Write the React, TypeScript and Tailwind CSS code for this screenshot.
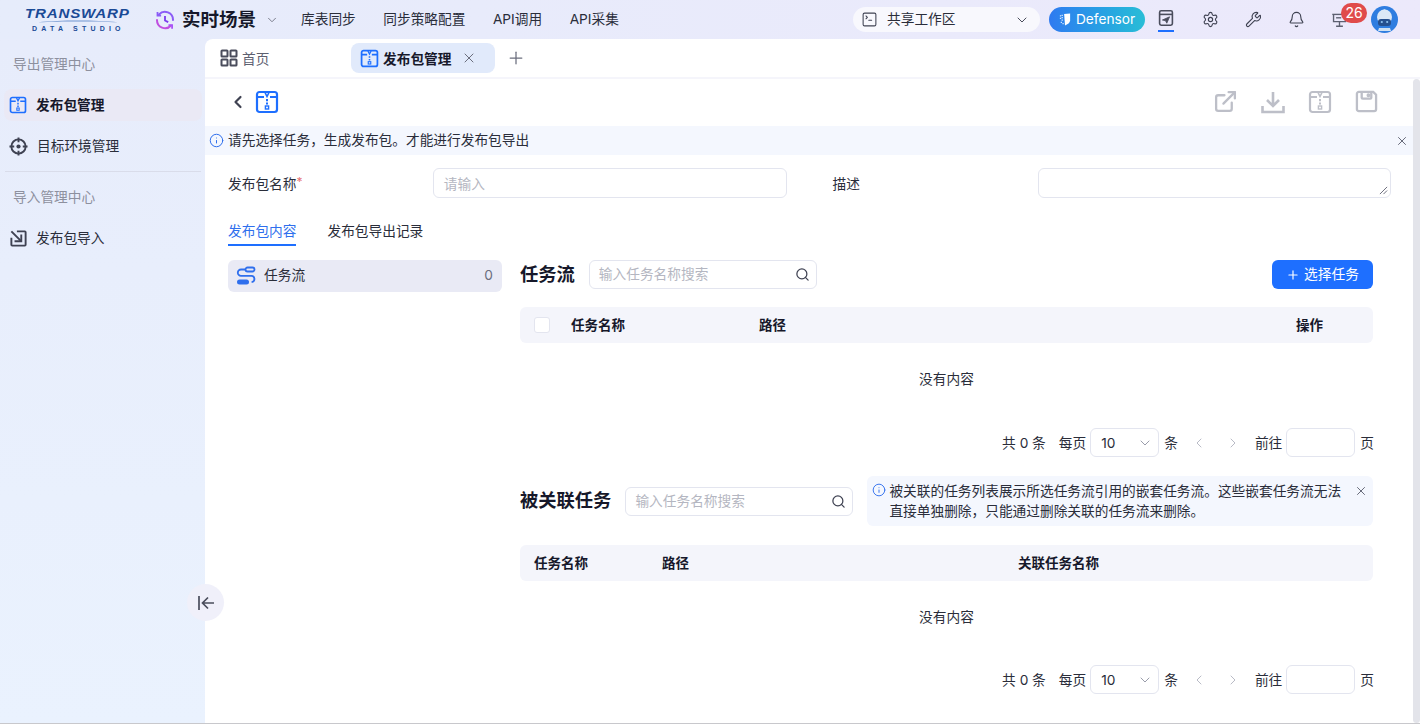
import { ChevronDown, ChevronLeft, ChevronRight, Search, Plus, X, Info, Settings, Wrench, Bell, ExternalLink, SquareTerminal } from 'lucide-react';

function ZipIcon({ className }: { className?: string }) {
  return (
    <svg viewBox="0 0 24 24" fill="none" stroke="currentColor" strokeWidth="2.2" className={className}>
      <rect x="2" y="2" width="20" height="20" rx="2.5" />
      <path d="M2 7h7M15 7h7" />
      <path d="M10 2.5l2 4 2-4" strokeWidth="1.6" />
      <path d="M12 9v2.2M12 12.6v2" strokeWidth="2" />
      <rect x="10.4" y="16" width="3.2" height="3" strokeWidth="1.4" />
    </svg>
  );
}

function SendBoxIcon({ className }: { className?: string }) {
  return (
    <svg viewBox="0 0 20 22" fill="none" stroke="currentColor" strokeWidth="2" className={className}>
      <rect x="2" y="2" width="16" height="18" rx="2" />
      <path d="M2 6.5h16" />
      <path d="M5.5 13.5l9-4-3.5 8-1.5-3z" fill="currentColor" strokeWidth="1" />
    </svg>
  );
}

function DisplayIcon({ className }: { className?: string }) {
  return (
    <svg viewBox="0 0 20 20" fill="none" stroke="currentColor" strokeWidth="1.6" className={className}>
      <path d="M1.5 4h17" />
      <path d="M3 4v8.5h14V4" />
      <path d="M10 12.5V18M6 18h8" />
      <path d="M6 8h6" />
    </svg>
  );
}

function FlowIcon({ className }: { className?: string }) {
  return (
    <svg viewBox="0 0 20 20" fill="none" className={className}>
      <rect x="9.5" y="1.5" width="9" height="4" rx="2" stroke="#2f6fed" strokeWidth="1.8" />
      <path d="M9.5 3.5H5a3.2 3.2 0 0 0 0 6.4h10a3.1 3.1 0 0 1 .6 6.2" stroke="#2f6fed" strokeWidth="1.8" />
      <rect x="1" y="13.5" width="12" height="5" rx="2.5" fill="#2f6fed" />
    </svg>
  );
}

function ScenarioIcon() {
  return (
    <svg viewBox="0 0 20 20" fill="none" className="w-[20px] h-[20px]">
      <path d="M4 4.5A8 8 0 0 1 18 10" stroke="#8b5cf6" strokeWidth="2" strokeLinecap="round" />
      <path d="M16 15.5A8 8 0 0 1 2 10" stroke="#c04fe0" strokeWidth="2" strokeLinecap="round" />
      <path d="M2.5 2v3.6h3.6" stroke="#8b5cf6" strokeWidth="1.8" />
      <path d="M13.5 15.2h3.6v3.6" stroke="#a855f7" strokeWidth="1.8" />
      <path d="M10 6v4.5l3.2 1.6" stroke="#7c3aed" strokeWidth="1.8" />
    </svg>
  );
}

function TargetIcon() {
  return (
    <svg viewBox="0 0 20 20" fill="none" stroke="#3f4252" strokeWidth="2" className="w-[19px] h-[19px]">
      <circle cx="10" cy="10" r="7.5" />
      <path d="M10 0.500v5M10 14.500v5M0.500 10h5M14.500 10h5" />
      <circle cx="10" cy="10" r="2.200" fill="#3f4252" stroke="none" />
    </svg>
  );
}

function ImportIcon() {
  return (
    <svg viewBox="0 0 24 24" fill="none" stroke="#3f4252" strokeWidth="2.4" className="w-[19px] h-[19px]">
      <path d="M10 3h10a1 1 0 0 1 1 1v16a1 1 0 0 1-1 1H4a1 1 0 0 1-1-1V11" />
      <path d="M3 3l12 12" />
      <path d="M15.5 7v8.500H7" />
    </svg>
  );
}

function GridIcon() {
  return (
    <svg viewBox="0 0 18 18" fill="none" stroke="#4a4d5c" strokeWidth="2" className="w-[18px] h-[18px]">
      <rect x="1.5" y="1.5" width="6" height="6" rx="0.6" />
      <rect x="10.5" y="1.5" width="6" height="6" rx="0.6" />
      <rect x="1.5" y="10.5" width="6" height="6" rx="0.6" />
      <rect x="10.5" y="10.5" width="6" height="6" rx="0.6" />
    </svg>
  );
}

function TrayDownloadIcon() {
  return (
    <svg viewBox="0 0 24 24" fill="none" stroke="currentColor" strokeWidth="2.6" className="w-[24px] h-[24px]">
      <path d="M12 2v13M6 10l6 6 6-6" />
      <path d="M1.5 16v6h21v-6" />
    </svg>
  );
}

function FloppyIcon() {
  return (
    <svg viewBox="0 0 24 24" fill="none" stroke="currentColor" strokeWidth="2.4" className="w-[23px] h-[23px]">
      <path d="M4 2h15l3 3v15a2 2 0 0 1-2 2H4a2 2 0 0 1-2-2V4a2 2 0 0 1 2-2z" />
      <path d="M7 2v6a1 1 0 0 0 1 1h8a1 1 0 0 0 1-1V2" />
      <circle cx="14" cy="5.5" r="0.8" fill="currentColor" />
    </svg>
  );
}

function Avatar() {
  return (
    <svg viewBox="0 0 27 27" className="w-[27px] h-[27px]">
      <circle cx="13.5" cy="13.5" r="13.5" fill="#2f7de0" />
      <circle cx="13.5" cy="11" r="7.5" fill="#dbe8f6" />
      <circle cx="13.5" cy="4.5" r="1.2" fill="#dbe8f6" />
      <rect x="7" y="13" width="13" height="7" rx="3" fill="#25508f" />
      <circle cx="10.8" cy="16" r="1.1" fill="#8fc4f2" />
      <circle cx="16.2" cy="16" r="1.1" fill="#8fc4f2" />
      <path d="M8 22h11l1 3H7z" fill="#cfe0f2" />
    </svg>
  );
}

function Pagination() {
  return (
    <div className="-mr-[1px] flex items-center justify-end h-[29px] text-[#2a2d3a] [&>span]:mt-[2px]">
      <span>共 0 条</span>
      <span className="ml-[13px]">每页</span>
      <div className="ml-[4px] w-[69px] h-[29px] border border-[#e3e5ef] rounded-[6px] flex items-center justify-between pl-[10px] pr-[5px]">
        <span className="mt-[2px]">10</span>
        <ChevronDown className="w-4 h-4 text-[#9a9dab]" strokeWidth={1.5} />
      </div>
      <span className="ml-[5px]">条</span>
      <ChevronLeft className="ml-[13px] w-4 h-4 text-[#b9bbc6]" strokeWidth={1.5} />
      <ChevronRight className="ml-[18px] w-4 h-4 text-[#b9bbc6]" strokeWidth={1.5} />
      <span className="ml-[14px]">前往</span>
      <div className="ml-[4px] w-[69px] h-[29px] border border-[#e3e5ef] rounded-[6px]" />
      <span className="ml-[5px]">页</span>
    </div>
  );
}

function SearchBox() {
  return (
    <div className="w-[228px] h-[29px] border border-[#e3e5ef] rounded-[6px] flex items-center justify-between pl-[9px] pr-[6px] bg-white">
      <span className="text-[#b4b6c1]">输入任务名称搜索</span>
      <Search className="w-[15px] h-[15px] text-[#3f4252]" strokeWidth={2} />
    </div>
  );
}

export default function App() {
  return (
    <div className="w-[1420px] h-[724px] overflow-hidden flex flex-col border-b border-[#c8c8cc] bg-gradient-to-r from-[#e6ecfb] to-[#ece9fb] text-[13.7px] text-[#2a2d3a] font-['Inter','Noto_Sans_CJK_SC',sans-serif]">
      {/* top bar */}
      <header className="h-[39px] shrink-0 flex items-center">
        <div className="w-[155px] pl-[25px] flex flex-col items-start leading-none relative">
          <span className="font-['Liberation_Sans',sans-serif] italic font-bold text-[13.5px] tracking-[0.7px] scale-x-[1.12] origin-left text-[#1a4a96]">TRANSWARP</span>
          <svg viewBox="0 0 106 4" className="w-[106px] h-[3px]"><path d="M0 3C30 0 76 0 106 3 76 1.5 30 1.5 0 3z" fill="#6f94cf" /></svg>
          <span className="mt-[2px] ml-[7px] font-['Liberation_Sans',sans-serif] font-bold text-[7px] tracking-[4.2px] text-[#1a4a96]">DATA STUDIO</span>
        </div>
        <ScenarioIcon />
        <span className="ml-[7px] text-[18.5px] font-bold text-[#16182a]">实时场景</span>
        <ChevronDown className="ml-[9px] w-[14px] h-[14px] text-[#6b6e7d]" strokeWidth={1.5} />
        <nav className="ml-[22px] flex gap-[27.5px]">
          <span>库表同步</span>
          <span>同步策略配置</span>
          <span>API调用</span>
          <span>API采集</span>
        </nav>
        <div className="ml-auto flex items-center">
          <div className="w-[187px] h-[25px] rounded-full bg-[#f8f8fd] flex items-center pl-[8px] pr-[10px]">
            <SquareTerminal className="w-[17px] h-[17px] text-[#3f4252]" strokeWidth={1.5} />
            <span className="ml-[9px]">共享工作区</span>
            <ChevronDown className="ml-auto w-[16px] h-[16px] text-[#4a4d5c]" strokeWidth={1.5} />
          </div>
          <div className="ml-[9px] w-[96px] h-[25px] rounded-full bg-gradient-to-r from-[#2f7af0] to-[#29bdd6] flex items-center justify-center text-white gap-[5px]">
            <svg viewBox="0 0 14 16" className="w-[12px] h-[15px]" fill="white">
              <path d="M6 1.6 13 1v8c0 3-3 5-6 6z" />
              <path d="M1 3h1.5v1.5H1zM3 2.500h1.500V4H3zM1 6h1.500v1.500H1zM3 5h1.500v1.500H3zM3 8h1.500v1.500H3zM2 10.500h1.500V12H2zM4 12h1.500v1.500H4z" opacity="0.8" />
            </svg>
            <span>Defensor</span>
          </div>
          <div className="ml-[13px] w-[16px] h-[25px] flex flex-col items-center justify-end">
            <SendBoxIcon className="w-[16px] h-[18px] text-[#4a4d5c]" />
            <div className="w-[16px] h-[2px] mt-[3px] bg-[#1e6fff]" />
          </div>
          <Settings className="ml-[28px] w-[17px] h-[17px] text-[#3f4252]" strokeWidth={1.6} />
          <Wrench className="ml-[26px] w-[17px] h-[17px] text-[#3f4252]" strokeWidth={1.6} />
          <Bell className="ml-[26px] w-[17px] h-[17px] text-[#3f4252]" strokeWidth={1.6} />
          <div className="ml-[26px] relative w-[17px] h-[17px]">
            <DisplayIcon className="w-[17px] h-[17px] text-[#5d6070]" />
            <span className="absolute -top-[8px] left-[10px] w-[26px] h-[20px] rounded-full bg-[#e04b4b] text-white text-[14px] leading-[20px] text-center">26</span>
          </div>
          <div className="ml-[23px] mr-[22px]">
            <Avatar />
          </div>
        </div>
      </header>

      <div className="flex-1 flex min-h-0">
        {/* left menu */}
        <aside className="w-[205px] shrink-0 relative bg-gradient-to-b from-[#e7ecfb] to-[#eaf2fe]">
          <div className="pl-[13px] h-[50px] flex items-center text-[#8d909e]">导出管理中心</div>
          <div className="ml-[4px] mr-[3px] h-[32px] rounded-[8px] bg-[#eae9f5] flex items-center pl-[5px] font-bold text-[#16182a]">
            <ZipIcon className="w-[18px] h-[18px] text-[#1e6fff]" />
            <span className="ml-[9px]">发布包管理</span>
          </div>
          <div className="mt-[9px] h-[32px] flex items-center pl-[9px]">
            <TargetIcon />
            <span className="ml-[9px]">目标环境管理</span>
          </div>
          <div className="mt-[9px] ml-[5px] mr-[4px] border-t border-[#d9dcea]" />
          <div className="pl-[13px] h-[50px] flex items-center text-[#8d909e]">导入管理中心</div>
          <div className="h-[32px] flex items-center pl-[9px]">
            <ImportIcon />
            <span className="ml-[8px]">发布包导入</span>
          </div>
          <div className="absolute left-[187px] top-[545px] w-[37px] h-[37px] rounded-full bg-[#f0f0fa] flex items-center justify-center z-10">
            <svg viewBox="0 0 20 20" fill="none" stroke="#4a4d5c" strokeWidth="1.7" className="w-[20px] h-[20px]">
              <path d="M3 3v14M18 10H6.500M12 4.500 6.500 10l5.500 5.500" />
            </svg>
          </div>
        </aside>

        {/* page */}
        <main className="flex-1 min-w-0 bg-white rounded-tl-[8px] flex flex-col">
          <div className="h-[38px] shrink-0 border-b-2 border-[#f5f5fb] flex items-center box-content">
            <div className="w-[146px] h-[30px] flex items-center pl-[15px] text-[#5d6070]">
              <GridIcon />
              <span className="ml-[4px] mt-[2px]">首页</span>
            </div>
            <div className="w-[144px] h-[30px] rounded-[8px] bg-[#e1eafb] flex items-center pl-[9px] font-bold text-[#16182a]">
              <ZipIcon className="w-[19px] h-[19px] text-[#1e6fff]" />
              <span className="ml-[4px] mt-[2px]">发布包管理</span>
              <X className="ml-[10px] w-[16px] h-[16px] text-[#6b6e7d]" strokeWidth={1.5} />
            </div>
            <Plus className="ml-[11px] w-[20px] h-[20px] text-[#6b6e7d]" strokeWidth={1.5} />
          </div>

          <div className="flex-1 flex min-h-0">
            <div className="flex-1 min-w-0">
              <div className="h-[47px] flex items-center pl-[23px] pr-[35px] pb-[2px]">
                <ChevronLeft className="w-[20px] h-[20px] text-[#3f4252]" strokeWidth={2.6} />
                <ZipIcon className="ml-[7px] w-[24px] h-[24px] text-[#1e6fff]" />
                <div className="ml-auto flex items-center gap-[23px] text-[#bdbfc8]">
                  <ExternalLink className="w-[25px] h-[25px]" strokeWidth={2.2} />
                  <TrayDownloadIcon />
                  <ZipIcon className="w-[24px] h-[24px]" />
                  <FloppyIcon />
                </div>
              </div>

              <div className="h-[29px] bg-[#f4f7fe] flex items-center pl-[4px] pr-[4px]">
                <Info className="w-[15px] h-[15px] text-[#2f6fed]" strokeWidth={1.6} />
                <span className="ml-[4px]">请先选择任务，生成发布包。才能进行发布包导出</span>
                <X className="ml-auto w-[14px] h-[14px] text-[#5d6070]" strokeWidth={1.6} />
              </div>

              <div className="mt-[13px] flex items-start pl-[23px] pr-[22px] h-[30px]">
                <div className="w-[205px] h-[30px] pt-[2px] flex items-center">发布包名称<span className="text-[#e57373] self-start mt-[3px] text-[12px]">*</span></div>
                <div className="w-[354px] h-[30px] pt-[2px] border border-[#e3e5ef] rounded-[6px] flex items-center pl-[10px] text-[#b4b6c1]">请输入</div>
                <div className="ml-[46px] w-[206px] h-[30px] pt-[2px] flex items-center">描述</div>
                <div className="w-[353px] h-[30px] border border-[#e3e5ef] rounded-[6px] relative">
                  <svg viewBox="0 0 10 10" className="absolute right-[2px] bottom-[2px] w-[9px] h-[9px]" stroke="#5d6070" strokeWidth="1"><path d="M9 1 1 9M9 5 5 9" /></svg>
                </div>
              </div>

              <div className="mt-[21px] pl-[23px] flex gap-[31px] h-[27px]">
                <div className="h-[27px] border-b-2 border-[#1e6fff] text-[#2f6fed] leading-[24px]">发布包内容</div>
                <div className="leading-[24px]">发布包导出记录</div>
              </div>

              <div className="mt-[14px] pl-[23px] pr-[40px] flex items-start">
                <div className="w-[274px] h-[32px] rounded-[6px] bg-[#e9eaf5] flex items-center pl-[8px] pr-[9px]">
                  <FlowIcon className="w-[20px] h-[20px]" />
                  <span className="ml-[8px] mb-[1px]">任务流</span>
                  <span className="ml-auto mb-[1px] text-[#6b6e7d]">0</span>
                </div>

                <div className="ml-[18px] flex-1 min-w-0">
                  <div className="flex items-center h-[29px]">
                    <span className="text-[18.3px] font-bold text-[#16182a]">任务流</span>
                    <div className="ml-[14px]"><SearchBox /></div>
                    <div className="ml-auto w-[101px] h-[29px] rounded-[6px] bg-[#1e6fff] text-white flex items-center justify-center gap-[4px]">
                      <Plus className="w-[14px] h-[14px]" strokeWidth={2} />
                      <span>选择任务</span>
                    </div>
                  </div>

                  <div className="mt-[18px] h-[36px] rounded-[6px] bg-[#f4f5fb] flex items-center font-bold text-[13.5px] text-[#16182a]">
                    <div className="ml-[14px] w-[16px] h-[16px] rounded-[3px] border border-[#e3e5ef] bg-white" />
                    <span className="ml-[21px] w-[188px]">任务名称</span>
                    <span>路径</span>
                    <span className="ml-auto mr-[50px]">操作</span>
                  </div>
                  <div className="h-[71px] pt-[2px] flex items-center justify-center">没有内容</div>
                  <div className="mt-[14px]"><Pagination /></div>

                  <div className="mt-[19px] flex items-center h-[50px]">
                    <span className="text-[18.3px] font-bold text-[#16182a]">被关联任务</span>
                    <div className="ml-[14px]"><SearchBox /></div>
                    <div className="ml-[14px] flex-1 h-[50px] rounded-[6px] bg-[#f4f7fe] flex items-start pl-[5px] pr-[5px] pt-[6px] leading-[19.5px]">
                      <Info className="mt-[1px] w-[14px] h-[14px] shrink-0 text-[#2f6fed]" strokeWidth={1.6} />
                      <span className="ml-[3px] w-[456px]">被关联的任务列表展示所选任务流引用的嵌套任务流。这些嵌套任务流无法直接单独删除，只能通过删除关联的任务流来删除。</span>
                      <X className="mt-[2px] ml-auto w-[14px] h-[14px] shrink-0 text-[#5d6070]" strokeWidth={1.6} />
                    </div>
                  </div>

                  <div className="mt-[19px] h-[36px] rounded-[6px] bg-[#f4f5fb] flex items-center font-bold text-[13.5px] text-[#16182a]">
                    <span className="ml-[14px] w-[128px]">任务名称</span>
                    <span className="w-[356px]">路径</span>
                    <span>关联任务名称</span>
                  </div>
                  <div className="h-[71px] pt-[2px] flex items-center justify-center">没有内容</div>
                  <div className="mt-[13px]"><Pagination /></div>
                </div>
              </div>
            </div>
            <div className="w-[7px] shrink-0 bg-[#e3e4ea] rounded-full" />
          </div>
        </main>
      </div>
    </div>
  );
}
